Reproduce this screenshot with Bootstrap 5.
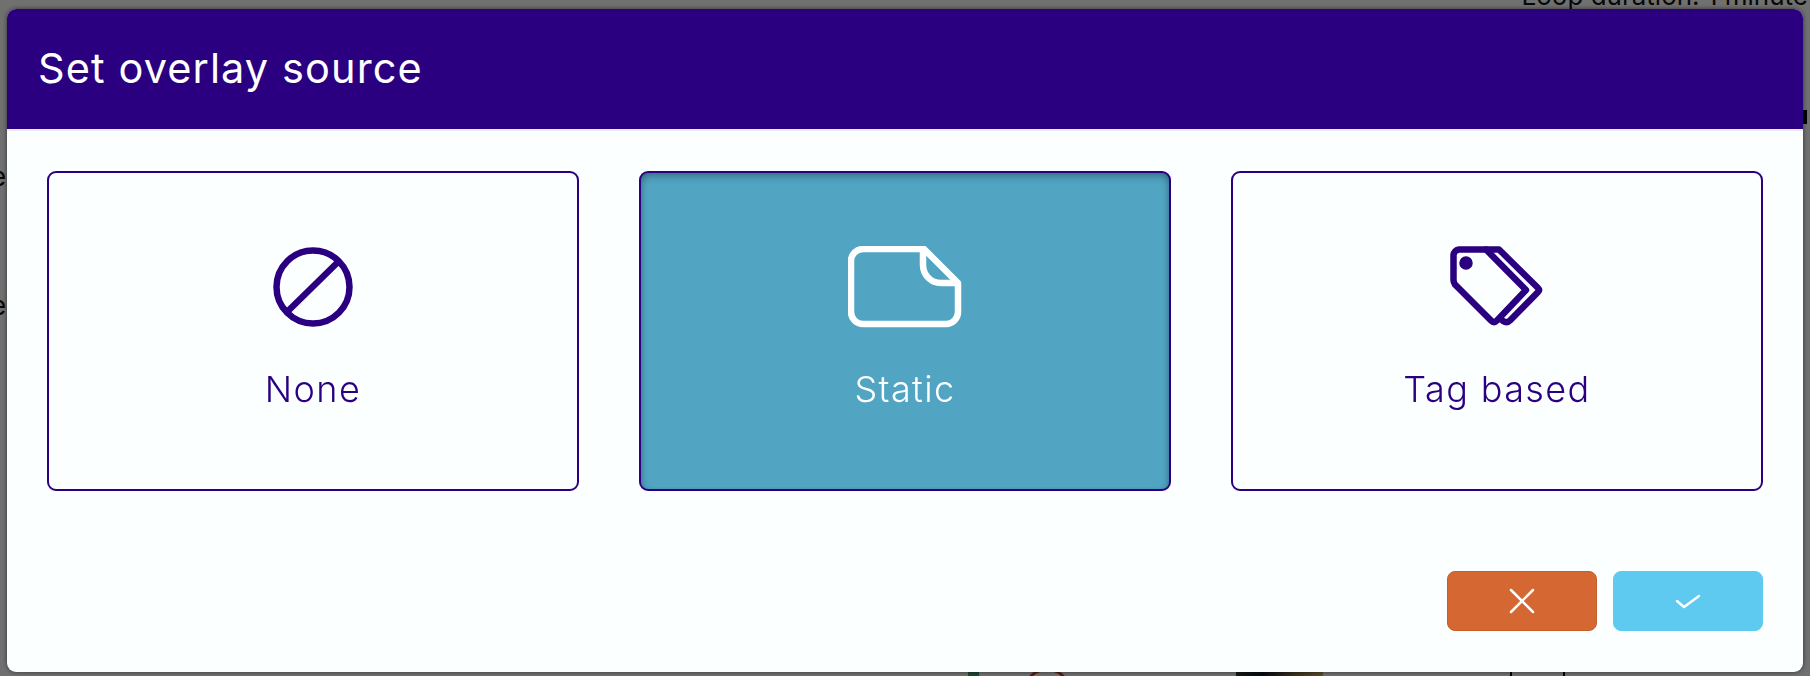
<!DOCTYPE html>
<html lang="en">

<head>
  <meta charset="UTF-8">
  <meta name="viewport" content="width=device-width, initial-scale=1.0">
  <title>Set overlay source</title>
  <link href="https://cdn.jsdelivr.net/npm/bootstrap@5.3.3/dist/css/bootstrap.min.css" rel="stylesheet">
  <style>
    body {
      font-family: "Inter", "Liberation Sans", sans-serif;
      background-color: #fff;
      overflow: hidden;
    }

    /* page behind the dialog, only slivers of it show */
    .under-page {
      height: 676px;
      color: #111;
      font-size: 26px;
      line-height: 1;
      overflow: hidden;
      position: relative;
    }

    .under-loop {
      margin-top: -17px;
      padding-right: 2px;
      text-align: right;
    }

    .under-bit {
      position: absolute;
    }

    .bit-left1 { left: -9px; top: 164px; }
    .bit-left2 { left: -9px; top: 293px; }
    .bit-right { left: 1803px; top: 110px; width: 4px; height: 14px; background: #000; }
    .bit-green { left: 968px; top: 672px; width: 11px; height: 4px; background: #3fa06a; }
    .bit-ring { left: 1027px; top: 668px; width: 40px; height: 30px; border: 3px solid #c8402a; border-radius: 50%; }
    .bit-photo { left: 1236px; top: 672px; width: 87px; height: 4px; background: linear-gradient(90deg, #2f3d2a, #10162a 30%, #8a7440 70%, #c9a860); }
    .bit-line1 { left: 1510px; top: 672px; width: 2px; height: 4px; background: #000; }
    .bit-line2 { left: 1563px; top: 672px; width: 2px; height: 4px; background: #000; }

    .modal-backdrop {
      --bs-backdrop-opacity: .56;
    }

    .overlay-modal .modal-dialog {
      max-width: none;
      margin: 9px 7px 4px 7px;
    }

    .overlay-modal .modal-content {
      height: 663px;
      border: 0;
      border-radius: 9px;
      background-color: #fcffff;
      box-shadow: 0 0 5px rgba(0, 0, 0, .55);
    }

    .overlay-modal .modal-header {
      height: 122px;
      padding: 0 31px;
      background-color: #2a0080;
      border-bottom: 2px solid #e9ecef;
      border-radius: 9px 9px 0 0;
    }

    .overlay-modal .modal-title {
      color: #fff;
      font-size: 41.5px;
      font-weight: 400;
      letter-spacing: 1.1px;
      line-height: 1.2;
    }

    .overlay-modal .modal-body {
      padding: 40px;
      flex: 0 0 auto;
    }

    .tile-row {
      gap: 60px;
    }

    .source-tile.btn {
      width: 532px;
      height: 320px;
      padding: 73px 0 0;
      border: 2px solid #2a0080;
      border-radius: 9px;
      background-color: #fcffff;
      color: #2a0080;
      font-size: 36px;
      font-weight: 300;
      letter-spacing: 1.4px;
      line-height: 1.2;
    }

    .source-tile.btn.active {
      background-color: #51a5c3;
      color: #fff;
      border-color: #2a0080;
      box-shadow: inset 0 5px 8px -2px rgba(0, 0, 0, .32), inset 4px 0 6px -4px rgba(0, 0, 0, .2), inset -4px 0 6px -4px rgba(0, 0, 0, .2);
    }

    .tile-icon {
      height: 82px;
      margin-bottom: 40px;
      display: block;
    }

    .overlay-modal .modal-footer {
      gap: 16px;
      padding: 40px 40px 41px;
      border-top: 0;
    }

    .overlay-modal .modal-footer > * {
      margin: 0;
    }

    .action-btn.btn {
      width: 150px;
      height: 60px;
      padding: 0;
      border-radius: 8px;
    }

    .action-cancel.btn {
      background-color: #d56832;
      border: 1px solid #c45e2c;
    }

    .action-ok.btn {
      background-color: #5ecaf0;
      border: 1px solid #5ecaf0;
    }
  </style>
</head>

<body>

  <div class="under-page">
    <div class="under-loop">Loop duration: 1 minute</div>
    <span class="under-bit bit-left1">e</span>
    <span class="under-bit bit-left2">e</span>
    <span class="under-bit bit-right"></span>
    <span class="under-bit bit-green"></span>
    <span class="under-bit bit-ring"></span>
    <span class="under-bit bit-photo"></span>
    <span class="under-bit bit-line1"></span>
    <span class="under-bit bit-line2"></span>
  </div>

  <div class="modal-backdrop show"></div>

  <div class="modal overlay-modal d-block" tabindex="-1" role="dialog">
    <div class="modal-dialog">
      <div class="modal-content">
        <div class="modal-header">
          <h5 class="modal-title">Set overlay source</h5>
        </div>
        <div class="modal-body">
          <div class="d-flex tile-row">
            <!-- None -->
            <button type="button" class="btn source-tile d-flex flex-column align-items-center">
              <svg class="tile-icon" width="80" height="82" viewBox="0 0 80 82" fill="none" stroke="#2a0080" stroke-width="6.500">
                <circle cx="40" cy="41" r="36.500"/>
                <line x1="15" y1="65" x2="65" y2="16"/>
              </svg>
              <span>None</span>
            </button>
            <!-- Static -->
            <button type="button" class="btn source-tile active d-flex flex-column align-items-center">
              <svg class="tile-icon" width="114" height="82" viewBox="0 0 114 82" fill="none" stroke="#fff" stroke-width="6.500" stroke-linejoin="round">
                <path d="M76 3H15A12 12 0 0 0 3 15V66A12 12 0 0 0 15 78H98A12 12 0 0 0 110 66V37Z"/>
                <path d="M75 3V19A18 18 0 0 0 93 37H110"/>
              </svg>
              <span>Static</span>
            </button>
            <!-- Tag based -->
            <button type="button" class="btn source-tile d-flex flex-column align-items-center">
              <svg class="tile-icon" width="94" height="82" viewBox="0 0 94 82" fill="none" stroke="#2a0080" stroke-width="6.500" stroke-linejoin="round" stroke-linecap="round">
                <path d="M9 3.500H36L76 44L47 74.500Q44 77.500 41 74.500L5 38.500Q3.500 36.500 3.500 34V9A6 6 0 0 1 9 3.500Z"/>
                <path d="M36 3.500H49L88 42Q90 44 88 46L60 74.500Q57 77.500 53 75"/>
                <circle cx="16" cy="17" r="3.500" fill="#2a0080"/>
              </svg>
              <span>Tag based</span>
            </button>
          </div>
        </div>
        <div class="modal-footer">
          <button type="button" class="btn action-btn action-cancel d-flex align-items-center justify-content-center" aria-label="Cancel">
            <svg width="26" height="26" viewBox="0 0 26 26" fill="none" stroke="#fff" stroke-width="2.500" stroke-linecap="round">
              <line x1="2" y1="2" x2="24" y2="24"/>
              <line x1="24" y1="2" x2="2" y2="24"/>
            </svg>
          </button>
          <button type="button" class="btn action-btn action-ok d-flex align-items-center justify-content-center" aria-label="Confirm">
            <svg width="26" height="16" viewBox="0 0 26 16" fill="none" stroke="#fff" stroke-width="2.500" stroke-linecap="round" stroke-linejoin="round">
              <path d="M2 8L9 14L24 3"/>
            </svg>
          </button>
        </div>
      </div>
    </div>
  </div>

  <script src="https://cdn.jsdelivr.net/npm/bootstrap@5.3.3/dist/js/bootstrap.bundle.min.js"></script>
</body>

</html>
